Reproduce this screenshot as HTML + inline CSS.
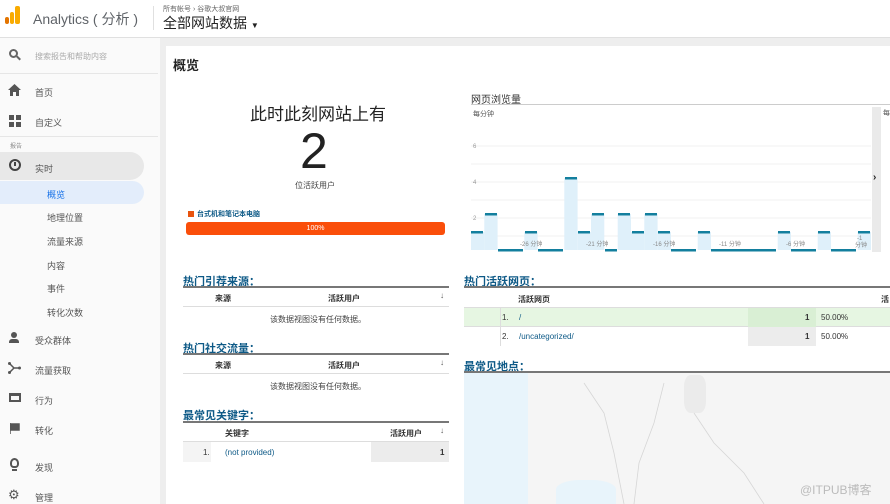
<!DOCTYPE html>
<html><head><meta charset="utf-8"><style>
*{margin:0;padding:0;box-sizing:border-box}
body{width:890px;height:504px;overflow:hidden;background:#eeeeee;font-family:"Liberation Sans","Noto Sans CJK SC",sans-serif;position:relative;color:#333}
.a{position:absolute;white-space:nowrap}
.side{position:absolute;left:0;top:38px;width:160px;height:466px;background:#fafafa}
.nav{font-size:9px;color:#555}
.h{font-size:11px;font-weight:bold;color:#0e5a87}
.tb{position:absolute;border-top:2px solid #777;background:#fff;font-size:8px}
.row{position:absolute;left:0;right:0;border-bottom:1px solid #ddd}
</style></head><body>
<div class="a" style="left:0;top:0;width:890px;height:38px;background:#fff;border-bottom:1px solid #e0e0e0"></div>
<div class="a" style="left:5px;top:17px;width:4px;height:7px;background:#e37400;border-radius:2px"></div>
<div class="a" style="left:10px;top:12px;width:4px;height:12px;background:#f9ab00;border-radius:2px"></div>
<div class="a" style="left:15px;top:6px;width:5px;height:18px;background:#f9ab00;border-radius:2px"></div>
<div class="a" style="left:33px;top:9px;font-size:14px;color:#5f6368">Analytics ( 分析 )</div>
<div class="a" style="left:153px;top:6px;width:1px;height:24px;background:#e0e0e0"></div>
<div class="a" style="left:163px;top:4px;font-size:7px;color:#666">所有帐号 › 谷歌大叔官网</div>
<div class="a" style="left:163px;top:13px;font-size:14px;color:#222">全部网站数据 <span style="font-size:8px">▼</span></div>
<div class="side"></div>
<div class="a" style="left:9px;top:49px;width:9px;height:9px;border:2px solid #666;border-radius:50%"></div>
<div class="a" style="left:16px;top:57px;width:5px;height:2px;background:#666;transform:rotate(45deg)"></div>
<div class="a nav" style="left:35px;top:51px;font-size:8px;color:#aaa">搜索报告和帮助内容</div>
<div class="a" style="left:0;top:73px;width:158px;height:1px;background:#e6e6e6"></div>
<svg class="a" style="left:8px;top:84px" width="13" height="12"><path d="M6.5 0 L13 6 L11 6 L11 12 L8 12 L8 8 L5 8 L5 12 L2 12 L2 6 L0 6Z" fill="#555"/></svg>
<div class="a nav" style="left:35px;top:86px">首页</div>
<div class="a" style="left:9px;top:115px;width:5px;height:5px;background:#555;box-shadow:7px 0 #555,0 7px #555,7px 7px #555"></div>
<div class="a nav" style="left:35px;top:116px">自定义</div>
<div class="a" style="left:0;top:136px;width:158px;height:1px;background:#e6e6e6"></div>
<div class="a" style="left:10px;top:141px;font-size:6px;color:#888">报告</div>
<div class="a" style="left:0;top:152px;width:144px;height:28px;background:#e8e8e8;border-radius:0 14px 14px 0"></div>
<div class="a" style="left:9px;top:159px;width:12px;height:12px;border:2px solid #444;border-radius:50%"></div>
<div class="a" style="left:14px;top:162px;width:2px;height:4px;background:#444"></div>
<div class="a nav" style="left:35px;top:162px">实时</div>
<div class="a" style="left:0;top:181px;width:144px;height:23px;background:#e3edfb;border-radius:0 12px 12px 0"></div>
<div class="a nav" style="left:47px;top:188px;color:#1a73e8">概览</div>
<div class="a nav" style="left:47px;top:211px">地理位置</div>
<div class="a nav" style="left:47px;top:235px">流量来源</div>
<div class="a nav" style="left:47px;top:259px">内容</div>
<div class="a nav" style="left:47px;top:282px">事件</div>
<div class="a nav" style="left:47px;top:306px">转化次数</div>
<div class="a" style="left:11px;top:332px;width:6px;height:6px;background:#555;border-radius:50%"></div>
<div class="a" style="left:9px;top:339px;width:10px;height:4px;background:#555;border-radius:3px 3px 0 0"></div>
<div class="a nav" style="left:35px;top:334px">受众群体</div>
<svg class="a" style="left:8px;top:362px" width="13" height="12"><path d="M1 1 L6 6 L12 6 M6 6 L1 11" stroke="#555" stroke-width="1.5" fill="none"/><circle cx="1.5" cy="1.5" r="1.5" fill="#555"/><circle cx="1.5" cy="10.5" r="1.5" fill="#555"/><circle cx="11.5" cy="6" r="1.5" fill="#555"/></svg>
<div class="a nav" style="left:35px;top:364px">流量获取</div>
<div class="a" style="left:9px;top:393px;width:12px;height:9px;border:2px solid #555;border-top-width:3px"></div>
<div class="a nav" style="left:35px;top:394px">行为</div>
<svg class="a" style="left:10px;top:423px" width="10" height="11"><path d="M0 0 L0 11 M0 1 L9 1 L9 7 L0 7" fill="#555" stroke="#555" stroke-width="1.5"/></svg>
<div class="a nav" style="left:35px;top:424px">转化</div>
<div class="a" style="left:10px;top:458px;width:9px;height:10px;border:2px solid #555;border-radius:50% 50% 40% 40%"></div>
<div class="a" style="left:12px;top:469px;width:5px;height:2px;background:#555"></div>
<div class="a nav" style="left:35px;top:461px">发现</div>
<div class="a" style="left:8px;top:487px;font-size:13px;color:#555">&#9881;</div>
<div class="a nav" style="left:35px;top:491px">管理</div>
<div class="a" style="left:166px;top:46px;width:724px;height:458px;background:#fff"></div>
<div class="a" style="left:173px;top:55px;font-size:13px;font-weight:bold;color:#222">概览</div>
<div class="a" style="left:250px;top:100px;font-size:17px;color:#222">此时此刻网站上有</div>
<div class="a" style="left:300px;top:122px;font-size:50px;color:#222;line-height:58px">2</div>
<div class="a" style="left:295px;top:180px;font-size:8px;color:#444">位活跃用户</div>
<div class="a" style="left:188px;top:211px;width:6px;height:6px;background:#e8530e"></div>
<div class="a" style="left:197px;top:209px;font-size:7px;color:#0e5a87;font-weight:bold">台式机和笔记本电脑</div>
<div class="a" style="left:186px;top:222px;width:259px;height:13px;background:#fa4e0a;border-radius:3px;color:#fff;font-size:7px;text-align:center;line-height:13px">100%</div>
<div class="a" style="left:471px;top:91px;font-size:10px;color:#333">网页浏览量</div>
<div class="a" style="left:471px;top:104px;width:419px;height:1px;background:#ccc"></div>
<div class="a" style="left:473px;top:109px;font-size:7px;color:#555">每分钟</div>
<svg class="a" style="left:471px;top:100px" width="400" height="155">
<g stroke="#f0f0f0"><line x1="0" y1="46" x2="400" y2="46"/><line x1="0" y1="64" x2="400" y2="64"/><line x1="0" y1="82" x2="400" y2="82"/><line x1="0" y1="100" x2="400" y2="100"/><line x1="0" y1="118" x2="400" y2="118"/><line x1="0" y1="136" x2="400" y2="136"/></g>
<g font-size="6" fill="#999" font-family="Liberation Sans"><text x="2" y="48">6</text><text x="2" y="84">4</text><text x="2" y="120">2</text></g>
<g fill="#dff0fa">
<rect x="0" y="132" width="13.3" height="18"/><rect x="13.3" y="114" width="13.3" height="36"/><rect x="53.3" y="132" width="13.3" height="18"/><rect x="93.3" y="78" width="13.3" height="72"/><rect x="106.7" y="132" width="13.3" height="18"/><rect x="120" y="114" width="13.3" height="36"/><rect x="146.7" y="114" width="13.3" height="36"/><rect x="160" y="132" width="13.3" height="18"/><rect x="173.3" y="114" width="13.3" height="36"/><rect x="186.7" y="132" width="13.3" height="18"/><rect x="226.7" y="132" width="13.3" height="18"/><rect x="306.7" y="132" width="13.3" height="18"/><rect x="346.7" y="132" width="13.3" height="18"/><rect x="386.7" y="132" width="13.3" height="18"/>
</g>
<g fill="#137f9e">
<rect x="0" y="131" width="12" height="2.5"/><rect x="14" y="113" width="12" height="2.5"/><rect x="27" y="149" width="25" height="2.5"/><rect x="54" y="131" width="12" height="2.5"/><rect x="67" y="149" width="25" height="2.5"/><rect x="94" y="77" width="12" height="2.5"/><rect x="107" y="131" width="12" height="2.5"/><rect x="121" y="113" width="12" height="2.5"/><rect x="134" y="149" width="12" height="2.5"/><rect x="147" y="113" width="12" height="2.5"/><rect x="161" y="131" width="12" height="2.5"/><rect x="174" y="113" width="12" height="2.5"/><rect x="187" y="131" width="12" height="2.5"/><rect x="200" y="149" width="25" height="2.5"/><rect x="227" y="131" width="12" height="2.5"/><rect x="240" y="149" width="65" height="2.5"/><rect x="307" y="131" width="12" height="2.5"/><rect x="320" y="149" width="25" height="2.5"/><rect x="347" y="131" width="12" height="2.5"/><rect x="360" y="149" width="25" height="2.5"/><rect x="387" y="131" width="12" height="2.5"/>
</g>
<g font-size="6" fill="#888" font-family="Liberation Sans,Noto Sans CJK SC"><text x="49" y="146">-26 分钟</text><text x="115" y="146">-21 分钟</text><text x="182" y="146">-16 分钟</text><text x="248" y="146">-11 分钟</text><text x="315" y="146">-6 分钟</text><text x="386" y="140">-1</text><text x="384" y="147">分钟</text></g>
</svg>
<div class="a" style="left:872px;top:107px;width:9px;height:145px;background:#eaeaea"></div>
<div class="a" style="left:873px;top:172px;font-size:10px;font-weight:bold;color:#222">›</div>
<div class="a" style="left:883px;top:108px;font-size:7px;color:#555">每</div>
<div class="a h" style="left:183px;top:273px">热门引荐来源：</div>
<div class="tb" style="left:183px;top:286px;width:266px;height:41px">
<div class="row" style="top:0;height:19px"></div>
<div class="a" style="left:32px;top:5px;font-weight:bold">来源</div><div class="a" style="left:145px;top:5px;font-weight:bold">活跃用户</div><div class="a" style="left:257px;top:3px;color:#555">↓</div>
<div class="a" style="left:87px;top:26px;color:#444">该数据视图没有任何数据。</div>
</div>
<div class="a h" style="left:183px;top:340px">热门社交流量：</div>
<div class="tb" style="left:183px;top:353px;width:266px;height:41px">
<div class="row" style="top:0;height:19px"></div>
<div class="a" style="left:32px;top:5px;font-weight:bold">来源</div><div class="a" style="left:145px;top:5px;font-weight:bold">活跃用户</div><div class="a" style="left:257px;top:3px;color:#555">↓</div>
<div class="a" style="left:87px;top:26px;color:#444">该数据视图没有任何数据。</div>
</div>
<div class="a h" style="left:183px;top:407px">最常见关键字：</div>
<div class="tb" style="left:183px;top:421px;width:266px;height:40px">
<div class="row" style="top:0;height:19px"></div>
<div class="a" style="left:42px;top:5px;font-weight:bold">关键字</div><div class="a" style="left:207px;top:5px;font-weight:bold">活跃用户</div><div class="a" style="left:257px;top:3px;color:#555">↓</div>
<div class="a" style="left:0;top:19px;width:28px;height:20px;background:#f4f4f4"></div>
<div class="a" style="left:188px;top:19px;width:78px;height:20px;background:#ececec"></div>
<div class="a" style="left:20px;top:25px">1.</div><div class="a" style="left:42px;top:25px;color:#0e5a87">(not provided)</div><div class="a" style="left:257px;top:25px;font-weight:bold">1</div>
</div>
<div class="a h" style="left:464px;top:273px">热门活跃网页：</div>
<div class="tb" style="left:464px;top:286px;width:426px;height:59px">
<div class="row" style="top:0;height:20px"></div>
<div class="a" style="left:54px;top:6px;font-weight:bold">活跃网页</div><div class="a" style="left:417px;top:6px;font-weight:bold">活</div>
<div class="a" style="left:0;top:20px;width:426px;height:19px;background:#e6f6e2;border-bottom:1px solid #ddd"></div>
<div class="a" style="left:284px;top:20px;width:68px;height:19px;background:#d9efd4"></div>
<div class="a" style="left:0;top:39px;width:36px;height:19px;background:#fff"></div>
<div class="a" style="left:284px;top:39px;width:68px;height:19px;background:#ececec"></div>
<div class="a" style="left:36px;top:20px;width:1px;height:38px;background:#ddd"></div>
<div class="a" style="left:38px;top:25px">1.</div><div class="a" style="left:55px;top:25px;color:#0e5a87">/</div><div class="a" style="left:341px;top:25px;font-weight:bold">1</div><div class="a" style="left:357px;top:25px">50.00%</div>
<div class="a" style="left:38px;top:44px">2.</div><div class="a" style="left:55px;top:44px;color:#0e5a87">/uncategorized/</div><div class="a" style="left:341px;top:44px;font-weight:bold">1</div><div class="a" style="left:357px;top:44px">50.00%</div>
</div>
<div class="a h" style="left:464px;top:358px">最常见地点：</div>
<div class="a" style="left:464px;top:371px;width:426px;height:133px;background:#f5f5f5;border-top:2px solid #777"></div>
<div class="a" style="left:464px;top:373px;width:64px;height:131px;background:#e8f4fb"></div>
<div class="a" style="left:556px;top:480px;width:60px;height:24px;background:#e8f4fb;border-radius:40% 40% 0 0"></div>
<div class="a" style="left:684px;top:375px;width:22px;height:38px;background:#ebebeb;border-radius:30%"></div>
<svg class="a" style="left:464px;top:373px" width="426" height="131"><g fill="none" stroke="#d6d6d6" stroke-width="0.8"><path d="M120 10 L140 40 L150 80 L160 131"/><path d="M200 10 L190 50 L175 90 L170 131"/><path d="M230 40 L250 70 L280 100 L300 131"/></g></svg>
<div class="a" style="left:800px;top:481px;font-size:12px;color:#bbb">@ITPUB博客</div>
</body></html>
